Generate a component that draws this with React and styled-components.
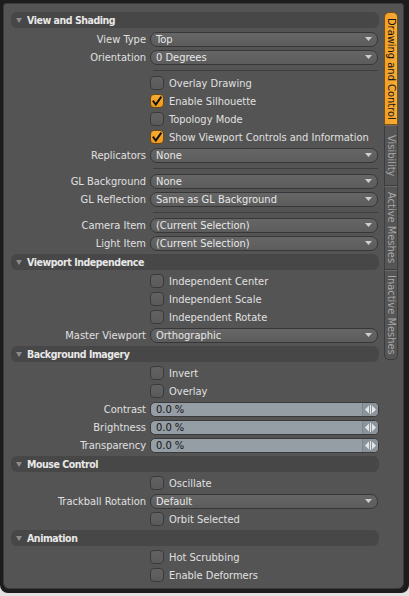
import React from 'react';
import styled, { createGlobalStyle } from 'styled-components';

const Global = createGlobalStyle`
  html, body { margin: 0; padding: 0; background: #e2e2e2; }
  body {
    width: 409px; height: 596px; overflow: hidden;
    font-family: "DejaVu Sans Condensed", "Liberation Sans", sans-serif;
    font-size: 11px;
    -webkit-font-smoothing: antialiased;
  }
`;

const Window = styled.div`
  width: 409px;
  height: 593px;
  box-sizing: border-box;
  background: #1c1c1c;
  border-radius: 0 0 8px 8px;
  padding: 3px 5px 4px 3px;
  display: flex;
`;

const Panel = styled.div`
  flex: 1;
  display: flex;
  gap: 5px;
  background: #545454;
  border: 1px solid #3a3a3a;
  border-radius: 3px 3px 6px 6px;
  padding: 8px 5px 0 7px;
`;

const Main = styled.div`
  flex: 1;
  display: flex;
  flex-direction: column;
`;

const Section = styled.section`
  display: flex;
  flex-direction: column;
  & + & { margin-top: 2px; }
`;

const Header = styled.div`
  height: 16px;
  margin-bottom: 2px;
  border-radius: 6px;
  background: #474747;
  display: flex;
  align-items: center;
  padding-left: 5px;
  color: #e8e8e8;
  font-weight: bold;
  font-size: 10.5px;
  letter-spacing: -0.45px;
  svg { margin-right: 5px; }
`;

const Row = styled.div`
  display: grid;
  grid-template-columns: 135px 1fr;
  column-gap: 4px;
  height: 18px;
  align-items: center;
`;

const Label = styled.div`
  grid-column: 1;
  text-align: right;
  color: #e0e0e0;
  white-space: nowrap;
`;

const Control = styled.div`
  grid-column: 2;
  display: flex;
  align-items: center;
  min-width: 0;
`;

const Dropdown = styled.div`
  flex: 1;
  height: 15px;
  box-sizing: border-box;
  border: 1px solid #373737;
  border-radius: 7px;
  background: linear-gradient(#666666, #5c5c5c);
  color: #e8e8e8;
  display: flex;
  align-items: center;
  justify-content: space-between;
  padding: 0 5px 0 5px;
  margin-right: 1px;
  white-space: nowrap;
`;

const Box = styled.div`
  width: 14px;
  height: 14px;
  box-sizing: border-box;
  border-radius: 4px;
  border: 1px solid ${p => (p.$on ? '#6b4a12' : '#3a3a3a')};
  background: ${p => (p.$on ? 'linear-gradient(#f7ac35, #ee9a1c)' : 'linear-gradient(#626262, #5a5a5a)')};
  margin-right: 5px;
  display: flex;
  align-items: center;
  justify-content: center;
`;

const CheckText = styled.span`
  color: #e0e0e0;
  white-space: nowrap;
`;

const Slider = styled.div`
  flex: 1;
  height: 15px;
  box-sizing: border-box;
  border: 1px solid #3a3a3a;
  border-radius: 5px;
  background: #959da5;
  display: flex;
  align-items: stretch;
  overflow: hidden;
`;

const SliderValue = styled.div`
  flex: 1;
  color: #151515;
  padding-left: 5px;
  display: flex;
  align-items: center;
`;

const SliderCap = styled.div`
  width: 15px;
  background: #8b939b;
  border-left: 1px solid #7c848c;
  display: flex;
  align-items: center;
  justify-content: center;
`;

const Sep = styled.div`
  display: grid;
  grid-template-columns: 135px 1fr;
  column-gap: 4px;
  height: 8px;
  align-items: center;
`;

const SepLine = styled.div`
  grid-column: 2;
  height: 1px;
  margin: 0 1px 0 3px;
  background: #3e3e3e;
`;

const TabStrip = styled.div`
  width: 14px;
  display: flex;
  flex-direction: column;
  align-self: flex-start;
`;

const Tab = styled.div`
  height: ${p => p.$h}px;
  box-sizing: border-box;
  writing-mode: vertical-rl;
  display: flex;
  align-items: center;
  justify-content: center;
  white-space: nowrap;
  font-size: 11px;
  color: ${p => (p.$active ? '#141414' : '#a8a8a8')};
  background: ${p => (p.$active ? 'linear-gradient(90deg, #f2a02a, #f7ab35)' : '#555555')};
  border: 1px solid ${p => (p.$active ? '#7a5214' : '#3c3c3c')};
  border-top: ${p => (p.$first ? undefined : '1px solid #6a6a6a')};
  border-radius: ${p => (p.$first ? '5px 5px 0 0' : p.$last ? '0 0 5px 5px' : '0')};
`;

const Tri = () => (
  <svg width="6" height="5" viewBox="0 0 6 5"><path d="M0 0 H6 L3 5 Z" fill="#8c8c8c" /></svg>
);

const Arrow = () => (
  <svg width="7" height="4" viewBox="0 0 7 4"><path d="M0 0 H7 L3.5 4 Z" fill="#cfcfcf" /></svg>
);

const Check = () => (
  <svg width="10" height="10" viewBox="0 0 10 10">
    <path d="M1.5 5.5 L3.8 8.5 L8.8 1.5" fill="none" stroke="#111" strokeWidth="2" strokeLinecap="square" strokeLinejoin="miter" />
  </svg>
);

const Spin = () => (
  <svg width="11" height="9" viewBox="0 0 11 9">
    <path d="M4 0.5 V8.5 L0 4.5 Z" fill="#e4e6e8" />
    <path d="M7 0.5 V8.5 L11 4.5 Z" fill="#e4e6e8" />
    <rect x="5" y="0" width="1" height="9" fill="#e4e6e8" />
  </svg>
);

const Drop = ({ label, value }) => (
  <Row>
    <Label>{label}</Label>
    <Control>
      <Dropdown><span>{value}</span><Arrow /></Dropdown>
    </Control>
  </Row>
);

const Chk = ({ text, on }) => (
  <Row>
    <Control>
      <Box $on={on}>{on && <Check />}</Box>
      <CheckText>{text}</CheckText>
    </Control>
  </Row>
);

const Num = ({ label, value }) => (
  <Row>
    <Label>{label}</Label>
    <Control>
      <Slider>
        <SliderValue>{value}</SliderValue>
        <SliderCap><Spin /></SliderCap>
      </Slider>
    </Control>
  </Row>
);

const Divider = () => (
  <Sep><SepLine /></Sep>
);

const Head = ({ children }) => (
  <Header><Tri />{children}</Header>
);

export default function App() {
  return (
    <>
      <Global />
      <Window>
        <Panel>
          <Main>
            <Section>
              <Head>View and Shading</Head>
              <Drop label="View Type" value="Top" />
              <Drop label="Orientation" value="0 Degrees" />
              <Divider />
              <Chk text="Overlay Drawing" />
              <Chk text="Enable Silhouette" on />
              <Chk text="Topology Mode" />
              <Chk text="Show Viewport Controls and Information" on />
              <Drop label="Replicators" value="None" />
              <Divider />
              <Drop label="GL Background" value="None" />
              <Drop label="GL Reflection" value="Same as GL Background" />
              <Divider />
              <Drop label="Camera Item" value="(Current Selection)" />
              <Drop label="Light Item" value="(Current Selection)" />
            </Section>
            <Section>
              <Head>Viewport Independence</Head>
              <Chk text="Independent Center" />
              <Chk text="Independent Scale" />
              <Chk text="Independent Rotate" />
              <Drop label="Master Viewport" value="Orthographic" />
            </Section>
            <Section>
              <Head>Background Imagery</Head>
              <Chk text="Invert" />
              <Chk text="Overlay" />
              <Num label="Contrast" value="0.0 %" />
              <Num label="Brightness" value="0.0 %" />
              <Num label="Transparency" value="0.0 %" />
            </Section>
            <Section>
              <Head>Mouse Control</Head>
              <Chk text="Oscillate" />
              <Drop label="Trackball Rotation" value="Default" />
              <Chk text="Orbit Selected" />
            </Section>
            <Section>
              <Head>Animation</Head>
              <Chk text="Hot Scrubbing" />
              <Chk text="Enable Deformers" />
            </Section>
          </Main>
          <TabStrip>
            <Tab $active $first $h={113}>Drawing and Control</Tab>
            <Tab $h={61}>Visibility</Tab>
            <Tab $h={84}>Active Meshes</Tab>
            <Tab $last $h={90}>Inactive Meshes</Tab>
          </TabStrip>
        </Panel>
      </Window>
    </>
  );
}
